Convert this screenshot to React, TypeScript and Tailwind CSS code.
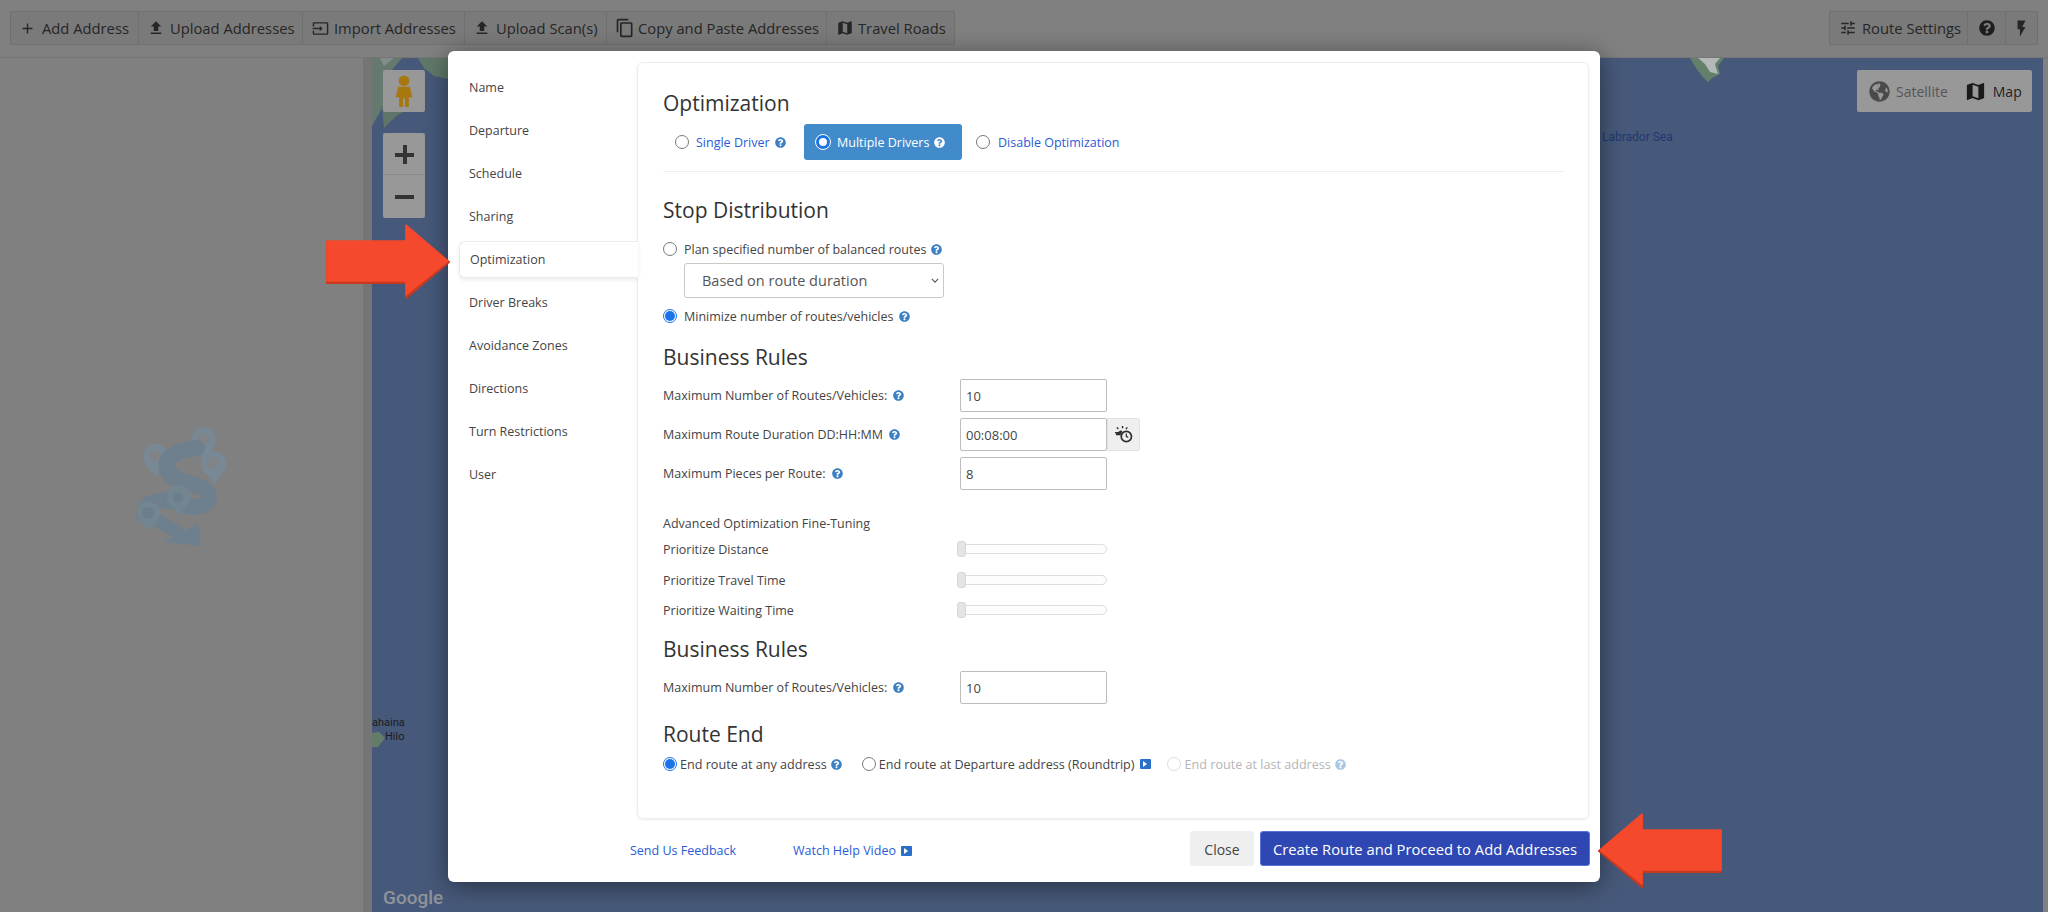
import type { ReactNode } from 'react';
import { FaGlobeAmericas, FaQuestionCircle } from 'react-icons/fa';
import { MdAdd, MdContentCopy, MdFileUpload, MdFlashOn, MdMap, MdOutlineInput, MdTune } from 'react-icons/md';

const sideItems = ['Name', 'Departure', 'Schedule', 'Sharing', 'Optimization', 'Driver Breaks', 'Avoidance Zones', 'Directions', 'Turn Restrictions', 'User'];

function Help({ light, faded }: { light?: boolean; faded?: boolean }) {
  return (
    <FaQuestionCircle
      className={`inline-block shrink-0 w-[11px] h-[11px] ${light ? 'text-white' : faded ? 'text-[#a9c8e6]' : 'text-[#3b80c4]'}`}
    />
  );
}

function Radio({ checked, disabled, onBlue }: { checked?: boolean; disabled?: boolean; onBlue?: boolean }) {
  if (onBlue) {
    return <span className="w-[14px] h-[14px] rounded-full bg-white border-[3px] border-[#1a73e8] outline outline-1 outline-white shrink-0" />;
  }
  if (checked) {
    return (
      <span className="w-[14px] h-[14px] rounded-full border border-[#1a73e8] bg-white flex items-center justify-center shrink-0">
        <span className="w-[10px] h-[10px] rounded-full bg-[#1a73e8]" />
      </span>
    );
  }
  return <span className={`w-[14px] h-[14px] rounded-full border bg-white shrink-0 ${disabled ? 'border-[#dddddd]' : 'border-[#777777]'}`} />;
}

function PlayBox() {
  return (
    <span className="inline-flex items-center justify-center w-[11px] h-[10px] rounded-[1px] bg-[#2a6fc9] shrink-0">
      <span className="w-0 h-0 border-y-[3px] border-y-transparent border-l-[4px] border-l-white" />
    </span>
  );
}

function ToolBtn({ icon, label, width, gap }: { icon: ReactNode; label: string; width: string; gap: string }) {
  return (
    <div className={`h-full flex items-center pl-[10px] border-r border-[#707070] last:border-r-0 ${gap} ${width}`}>
      {icon}
      <span>{label}</span>
    </div>
  );
}

function Heading({ children, className }: { children: ReactNode; className: string }) {
  return <h3 className={`h-[30px] flex items-center text-[21px] leading-[30px] text-[#333333] ${className}`}>{children}</h3>;
}

function FieldRow({ label, value, className, addon }: { label: string; value: string; className: string; addon?: boolean }) {
  return (
    <div className={`flex items-center h-[33px] ${className}`}>
      <div className="w-[297px] flex items-center gap-[6px] text-[12.5px] text-[#444444]">
        <span className="mt-[2px]">{label}</span> <Help />
      </div>
      <div className="w-[147px] h-full border border-[#bdbdbd] rounded-[2px] flex items-center pl-[5px] pt-[2px] text-[13px] text-[#444444]">{value}</div>
      {addon && (
        <div className="w-[33px] h-full bg-[#efefef] border border-[#e2e2e2] rounded-r-[2px] flex items-center justify-center">
          <svg viewBox="0 0 20 20" className="w-[19px] h-[19px] text-[#2e2e2e]" fill="none" stroke="currentColor">
            <circle cx="13" cy="12" r="5.4" strokeWidth="1.8" fill="#efefef" />
            <path d="M13 9v3l2 1.2" strokeWidth="1.3" />
            <path d="M9 1v2.5M3 2.5l1.6 1.8M1 8h2.5M14 2.5l-1.4 1.8" strokeWidth="1.5" />
            <path d="M2 10.5a3 3 0 0 1 3-3.5a3.2 3.2 0 0 1 4-.6L7.4 9.5L7 10.8H2.5Z" fill="currentColor" stroke="none" />
          </svg>
        </div>
      )}
    </div>
  );
}

function SliderRow({ label, className }: { label: string; className: string }) {
  return (
    <div className={`flex items-center h-[20px] ${className}`}>
      <div className="w-[294px] pt-[2px] text-[12.5px] text-[#444444]">{label}</div>
      <div className="relative w-[150px] h-[10px] rounded-full border border-[#dddddd] bg-[#fdfdfd]">
        <div className="absolute left-[-1px] top-[-4px] w-[9px] h-[16px] rounded-[3px] bg-[#e4e4e4] border border-[#d8d8d8]" />
      </div>
    </div>
  );
}

function Arrow({ className, flip }: { className: string; flip?: boolean }) {
  return (
    <svg viewBox="0 0 125 75" className={`absolute ${className}`} style={flip ? { transform: 'scaleX(-1)' } : undefined}>
      <path d="M1 18H80V2L123 38L80 74V59H1Z" fill="#c9391f" stroke="#c9391f" strokeWidth="2" strokeLinejoin="round" />
      <path d="M1 17H80V1L122 37L80 71V57H1Z" fill="#f5492d" stroke="#f5492d" strokeWidth="1.5" strokeLinejoin="round" />
    </svg>
  );
}

export default function App() {
  return (
    <div className="relative w-[2048px] h-[912px] overflow-hidden bg-[#808080] font-['Open_Sans',sans-serif]">
      {/* Toolbar */}
      <div className="h-[58px] flex justify-between pt-[11px] pl-[10px] pr-[10px] border-b border-[#757575] text-[14.75px] text-[#262626]">
        <div className="flex h-[34px] w-[945px] bg-[#7a7a7a] border border-[#707070] rounded-[2px]">
          <ToolBtn width="w-[128px]" gap="gap-[6px]" label="Add Address" icon={<MdAdd className="w-[17px] h-[17px] -ml-[2px]" />} />
          <ToolBtn width="w-[164px]" gap="gap-[5px]" label="Upload Addresses" icon={<MdFileUpload className="w-[18px] h-[18px] -ml-[2px]" />} />
          <ToolBtn width="w-[162px]" gap="gap-[5px]" label="Import Addresses" icon={<MdOutlineInput className="w-[17px] h-[17px] -ml-px" />} />
          <ToolBtn width="w-[142px]" gap="gap-[5px]" label="Upload Scan(s)" icon={<MdFileUpload className="w-[18px] h-[18px] -ml-[2px]" />} />
          <ToolBtn width="w-[220px]" gap="gap-[3px]" label="Copy and Paste Addresses" icon={<MdContentCopy className="w-[20px] h-[20px] -ml-[2px]" />} />
          <ToolBtn width="w-[127px]" gap="gap-[4px]" label="Travel Roads" icon={<MdMap className="w-[18px] h-[18px] -ml-px" />} />
        </div>
        <div className="flex h-[34px] w-[209px] bg-[#7a7a7a] border border-[#707070] rounded-[2px]">
          <ToolBtn width="w-[138px]" gap="gap-[5px]" label="Route Settings" icon={<MdTune className="w-[18px] h-[18px] -ml-px" />} />
          <div className="w-[38px] flex items-center justify-center border-r border-[#707070]">
            <FaQuestionCircle className="w-[16px] h-[16px] text-[#1d1d1d]" />
          </div>
          <div className="flex-1 flex items-center justify-center">
            <MdFlashOn className="w-[19px] h-[19px]" />
          </div>
        </div>
      </div>

      {/* Page body */}
      <div className="flex h-[854px]">
        <div className="w-[363px] relative">
          {/* watermark logo */}
          <svg viewBox="0 0 94 120" className="absolute left-[133px] top-[369px] w-[94px] h-[120px]" fill="none">
            <g fill="#788894">
              <path d="M22 17a13 13 0 0 1 13 13c0 8-8 13-12 20c-4-7-13-12-13-20a13 13 0 0 1 12-13Z" />
              <path d="M70 0a13 13 0 0 1 13 13c0 8-8 13-12 20c-4-7-13-12-13-20a13 13 0 0 1 12-13Z" />
              <path d="M80 24a13 13 0 0 1 13 13c0 8-8 13-12 20c-4-7-13-12-13-20a13 13 0 0 1 12-13Z" />
            </g>
            <circle cx="22" cy="29" r="6" fill="#808488" />
            <circle cx="70" cy="12" r="6" fill="#808488" />
            <circle cx="80" cy="36" r="6" fill="#808488" />
            <path d="M64 21C40 23 28 34 36 46C44 58 76 56 76 70C76 82 58 82 44 76C30 70 12 74 11 88" stroke="#6e7f8e" strokeWidth="16" strokeLinecap="round" />
            <path d="M22 92L48 107" stroke="#6e7f8e" strokeWidth="13" />
            <path d="M68 119L66 96L30 115Z" fill="#6e7f8e" />
            <g fill="#748592">
              <path d="M45 58a12 12 0 0 1 12 12c0 7-7 12-11 18c-4-6-12-11-12-18a12 12 0 0 1 11-12Z" />
              <path d="M15 74a12 12 0 0 1 12 12c0 7-7 12-11 18c-4-6-12-11-12-18a12 12 0 0 1 11-12Z" />
            </g>
            <circle cx="15" cy="86" r="6" fill="#6c7d8b" />
            <circle cx="45" cy="71" r="5" fill="#6c7d8b" />
          </svg>
        </div>
        <div className="w-[9px] bg-[#757575]" />
        <div className="relative w-[1671px] bg-[#47597a] overflow-hidden">
          {/* map land */}
          <svg viewBox="0 0 80 90" className="absolute left-0 top-0 w-[80px] h-[90px]">
            <path d="M0 0H30L20 12L30 24L16 34L10 50L0 68Z" fill="#66796e" />
            <path d="M8 0L22 0L12 8Z" fill="#858b86" />
            <path d="M10 48L36 40L46 46L24 58L12 70Z" fill="#607568" />
            <path d="M46 0H80V22L62 18L52 10Z" fill="#60786a" />
          </svg>
          <svg viewBox="0 0 40 24" className="absolute left-[1316px] top-0 w-[40px] h-[24px]">
            <path d="M2 0H36L30 8L32 16L24 20L20 24L14 18L8 10Z" fill="#64806a" />
            <path d="M10 0H32L27 6L30 16L22 14L17 6Z" fill="#b4b8b6" />
          </svg>
          <svg viewBox="0 0 14 16" className="absolute left-0 top-[674px] w-[14px] h-[16px]">
            <path d="M0 1L7 0L13 6L6 15H0Z" fill="#647d68" />
          </svg>
          <span className="absolute left-0 top-[657px] text-[11px] leading-[16px] text-[#1c1c1c] font-['Roboto',sans-serif]">ahaina</span>
          <span className="absolute left-[13px] top-[671px] text-[11px] leading-[16px] text-[#1c1c1c] font-['Roboto',sans-serif]">Hilo</span>
          <span className="absolute left-[1230px] top-[71px] text-[12px] leading-[16px] text-[#1e3a70] font-['Roboto',sans-serif]">Labrador Sea</span>
          <span className="absolute left-[11px] top-[828px] text-[19px] leading-[24px] font-medium text-[#8f939b] font-['Roboto',sans-serif]">Google</span>

          {/* pegman */}
          <div className="absolute left-[11px] top-[12px] w-[42px] h-[42px] rounded-[2px] bg-[#989898] flex items-center justify-center">
            <svg viewBox="0 0 18 34" className="w-[18px] h-[33px]">
              <circle cx="9" cy="6" r="5.5" fill="#a87810" />
              <path d="M3 12H15L17.5 23H14V33H10V24H8V33H4V23H.5Z" fill="#a87810" />
            </svg>
          </div>
          {/* zoom */}
          <div className="absolute left-[11px] top-[75px] w-[42px] h-[85px] rounded-[2px] bg-[#989898] flex flex-col items-center">
            <div className="h-[42px] relative border-b border-[#8c8c8c] w-full">
              <span className="absolute left-[12px] top-[20px] w-[19px] h-[4px] bg-[#333333]" />
              <span className="absolute left-[20px] top-[12px] w-[4px] h-[19px] bg-[#333333]" />
            </div>
            <div className="flex-1 relative w-full">
              <span className="absolute left-[12px] top-[20px] w-[19px] h-[4px] bg-[#333333]" />
            </div>
          </div>
          {/* map type */}
          <div className="absolute right-[11px] top-[12px] w-[175px] h-[42px] rounded-[2px] bg-[#989898] flex items-center pl-[12px] text-[14px]">
            <FaGlobeAmericas className="w-[21px] h-[21px] text-[#4a4a4a]" />
            <span className="ml-[6px] text-[#555555]">Satellite</span>
            <MdMap className="ml-[16px] w-[23px] h-[23px] text-[#1a1a1a]" />
            <span className="ml-[6px] text-[#1f1f1f]">Map</span>
          </div>
        </div>
      </div>

      {/* Modal */}
      <div className="absolute left-[448px] top-[51px] w-[1152px] h-[831px] bg-white rounded-[6px] shadow-[0_4px_24px_rgba(0,0,0,0.45)] flex flex-col">
        <div className="flex h-[768px]">
          <nav className="w-[189px] pt-[18px] pl-[11px] text-[12.5px] text-[#444444]">
            {sideItems.map(item => (
              <div
                key={item}
                className={
                  item === 'Optimization'
                    ? 'h-[37px] mb-[6px] flex items-center pl-[10px] relative z-10 -mr-px bg-white rounded-l-[6px] border border-r-0 border-[#ececec] shadow-[0_2px_4px_rgba(0,0,0,0.08)]'
                    : 'h-[37px] mb-[6px] flex items-center pl-[10px]'
                }
              >
                <span className="mt-px">{item}</span>
              </div>
            ))}
          </nav>
          <section className="mt-[11px] w-[952px] h-[757px] border border-[#eeeeee] rounded-[6px] shadow-[0_1px_3px_rgba(0,0,0,0.08)] pl-[25px] pr-[25px] pt-[25px] text-[12.5px] text-[#444444]">
            <Heading className="">Optimization</Heading>
            <div className="mt-[6px] h-[36px] flex items-center text-[12.5px] text-[#2a5bd7]">
              <div className="flex items-center w-[141px] pl-[12px]">
                <Radio />
                <span className="ml-[7px] mt-[2px]">Single Driver</span>
                <span className="ml-[5px] flex"><Help /></span>
              </div>
              <div className="flex items-center h-full w-[158px] bg-[#428bca] rounded-[3px] pl-[12px] text-white">
                <Radio onBlue />
                <span className="ml-[7px] mt-[2px]">Multiple Drivers</span>
                <span className="ml-[5px] flex"><Help light /></span>
              </div>
              <div className="flex items-center pl-[14px]">
                <Radio />
                <span className="ml-[8px] mt-[2px]">Disable Optimization</span>
              </div>
            </div>
            <div className="mt-[11px] h-[1px] bg-[#eeeeee]" />
            <Heading className="mt-[23px]">Stop Distribution</Heading>
            <div className="mt-[14px] h-[20px] flex items-center">
              <Radio />
              <span className="ml-[7px] mt-[2px]">Plan specified number of balanced routes</span>
              <span className="ml-[5px] flex"><Help /></span>
            </div>
            <div className="mt-[4px] ml-[21px] w-[260px] h-[35px] border border-[#c9c9c9] rounded-[3px] flex items-center justify-between pl-[17px] pr-[4px] text-[14.5px] text-[#555555]">
              Based on route duration
              <svg viewBox="0 0 10 6" className="w-[8px] h-[5px]" fill="none" stroke="#555555" strokeWidth="1.4"><path d="M1 1l4 4 4-4" /></svg>
            </div>
            <div className="mt-[8px] h-[20px] flex items-center">
              <Radio checked />
              <span className="ml-[7px] mt-[2px]">Minimize number of routes/vehicles</span>
              <span className="ml-[5px] flex"><Help /></span>
            </div>
            <Heading className="mt-[16px]">Business Rules</Heading>
            <FieldRow className="mt-[7px]" label="Maximum Number of Routes/Vehicles:" value="10" />
            <FieldRow className="mt-[6px]" label="Maximum Route Duration DD:HH:MM" value="00:08:00" addon />
            <FieldRow className="mt-[6px]" label="Maximum Pieces per Route:" value="8" />
            <div className="mt-[23px] h-[20px] pt-[2px] flex items-center">Advanced Optimization Fine-Tuning</div>
            <SliderRow className="mt-[6px]" label="Prioritize Distance" />
            <SliderRow className="mt-[11px]" label="Prioritize Travel Time" />
            <SliderRow className="mt-[10px]" label="Prioritize Waiting Time" />
            <Heading className="mt-[14px]">Business Rules</Heading>
            <FieldRow className="mt-[7px]" label="Maximum Number of Routes/Vehicles:" value="10" />
            <Heading className="mt-[15px]">Route End</Heading>
            <div className="mt-[5px] h-[20px] flex items-center text-[12.6px]">
              <Radio checked />
              <span className="ml-[3px] mt-[2px]">End route at any address</span>
              <span className="ml-[4px] flex"><Help /></span>
              <span className="ml-[20px] flex"><Radio /></span>
              <span className="ml-[3px] mt-[2px]">End route at Departure address (Roundtrip)</span>
              <span className="ml-[5px] flex"><PlayBox /></span>
              <span className="ml-[16px] flex"><Radio disabled /></span>
              <span className="ml-[4px] mt-[2px] text-[#b5b5b5]">End route at last address</span>
              <span className="ml-[4px] flex"><Help faded /></span>
            </div>
          </section>
        </div>
        <footer className="flex-1 flex items-start pl-[182px] pr-[10px] pt-[12px] text-[12.5px] text-[#2a5bd7]">
          <div className="h-[35px] pt-[5px] flex items-center w-[163px]">Send Us Feedback</div>
          <div className="h-[35px] pt-[5px] flex items-center gap-[5px]">
            Watch Help Video <PlayBox />
          </div>
          <div className="ml-auto flex gap-[6px]">
            <button className="w-[64px] h-[35px] pt-px rounded-[3px] bg-[#efefef] text-[14px] text-[#444444]">Close</button>
            <button className="w-[330px] h-[35px] pt-px rounded-[3px] bg-[#2f47b3] border border-[#5a72d6] text-[14.75px] text-white">
              Create Route and Proceed to Add Addresses
            </button>
          </div>
        </footer>
      </div>

      {/* Callout arrows */}
      <Arrow className="left-[326px] top-[224px] w-[125px] h-[75px]" />
      <Arrow className="left-[1597px] top-[813px] w-[125px] h-[75px]" flip />
    </div>
  );
}
